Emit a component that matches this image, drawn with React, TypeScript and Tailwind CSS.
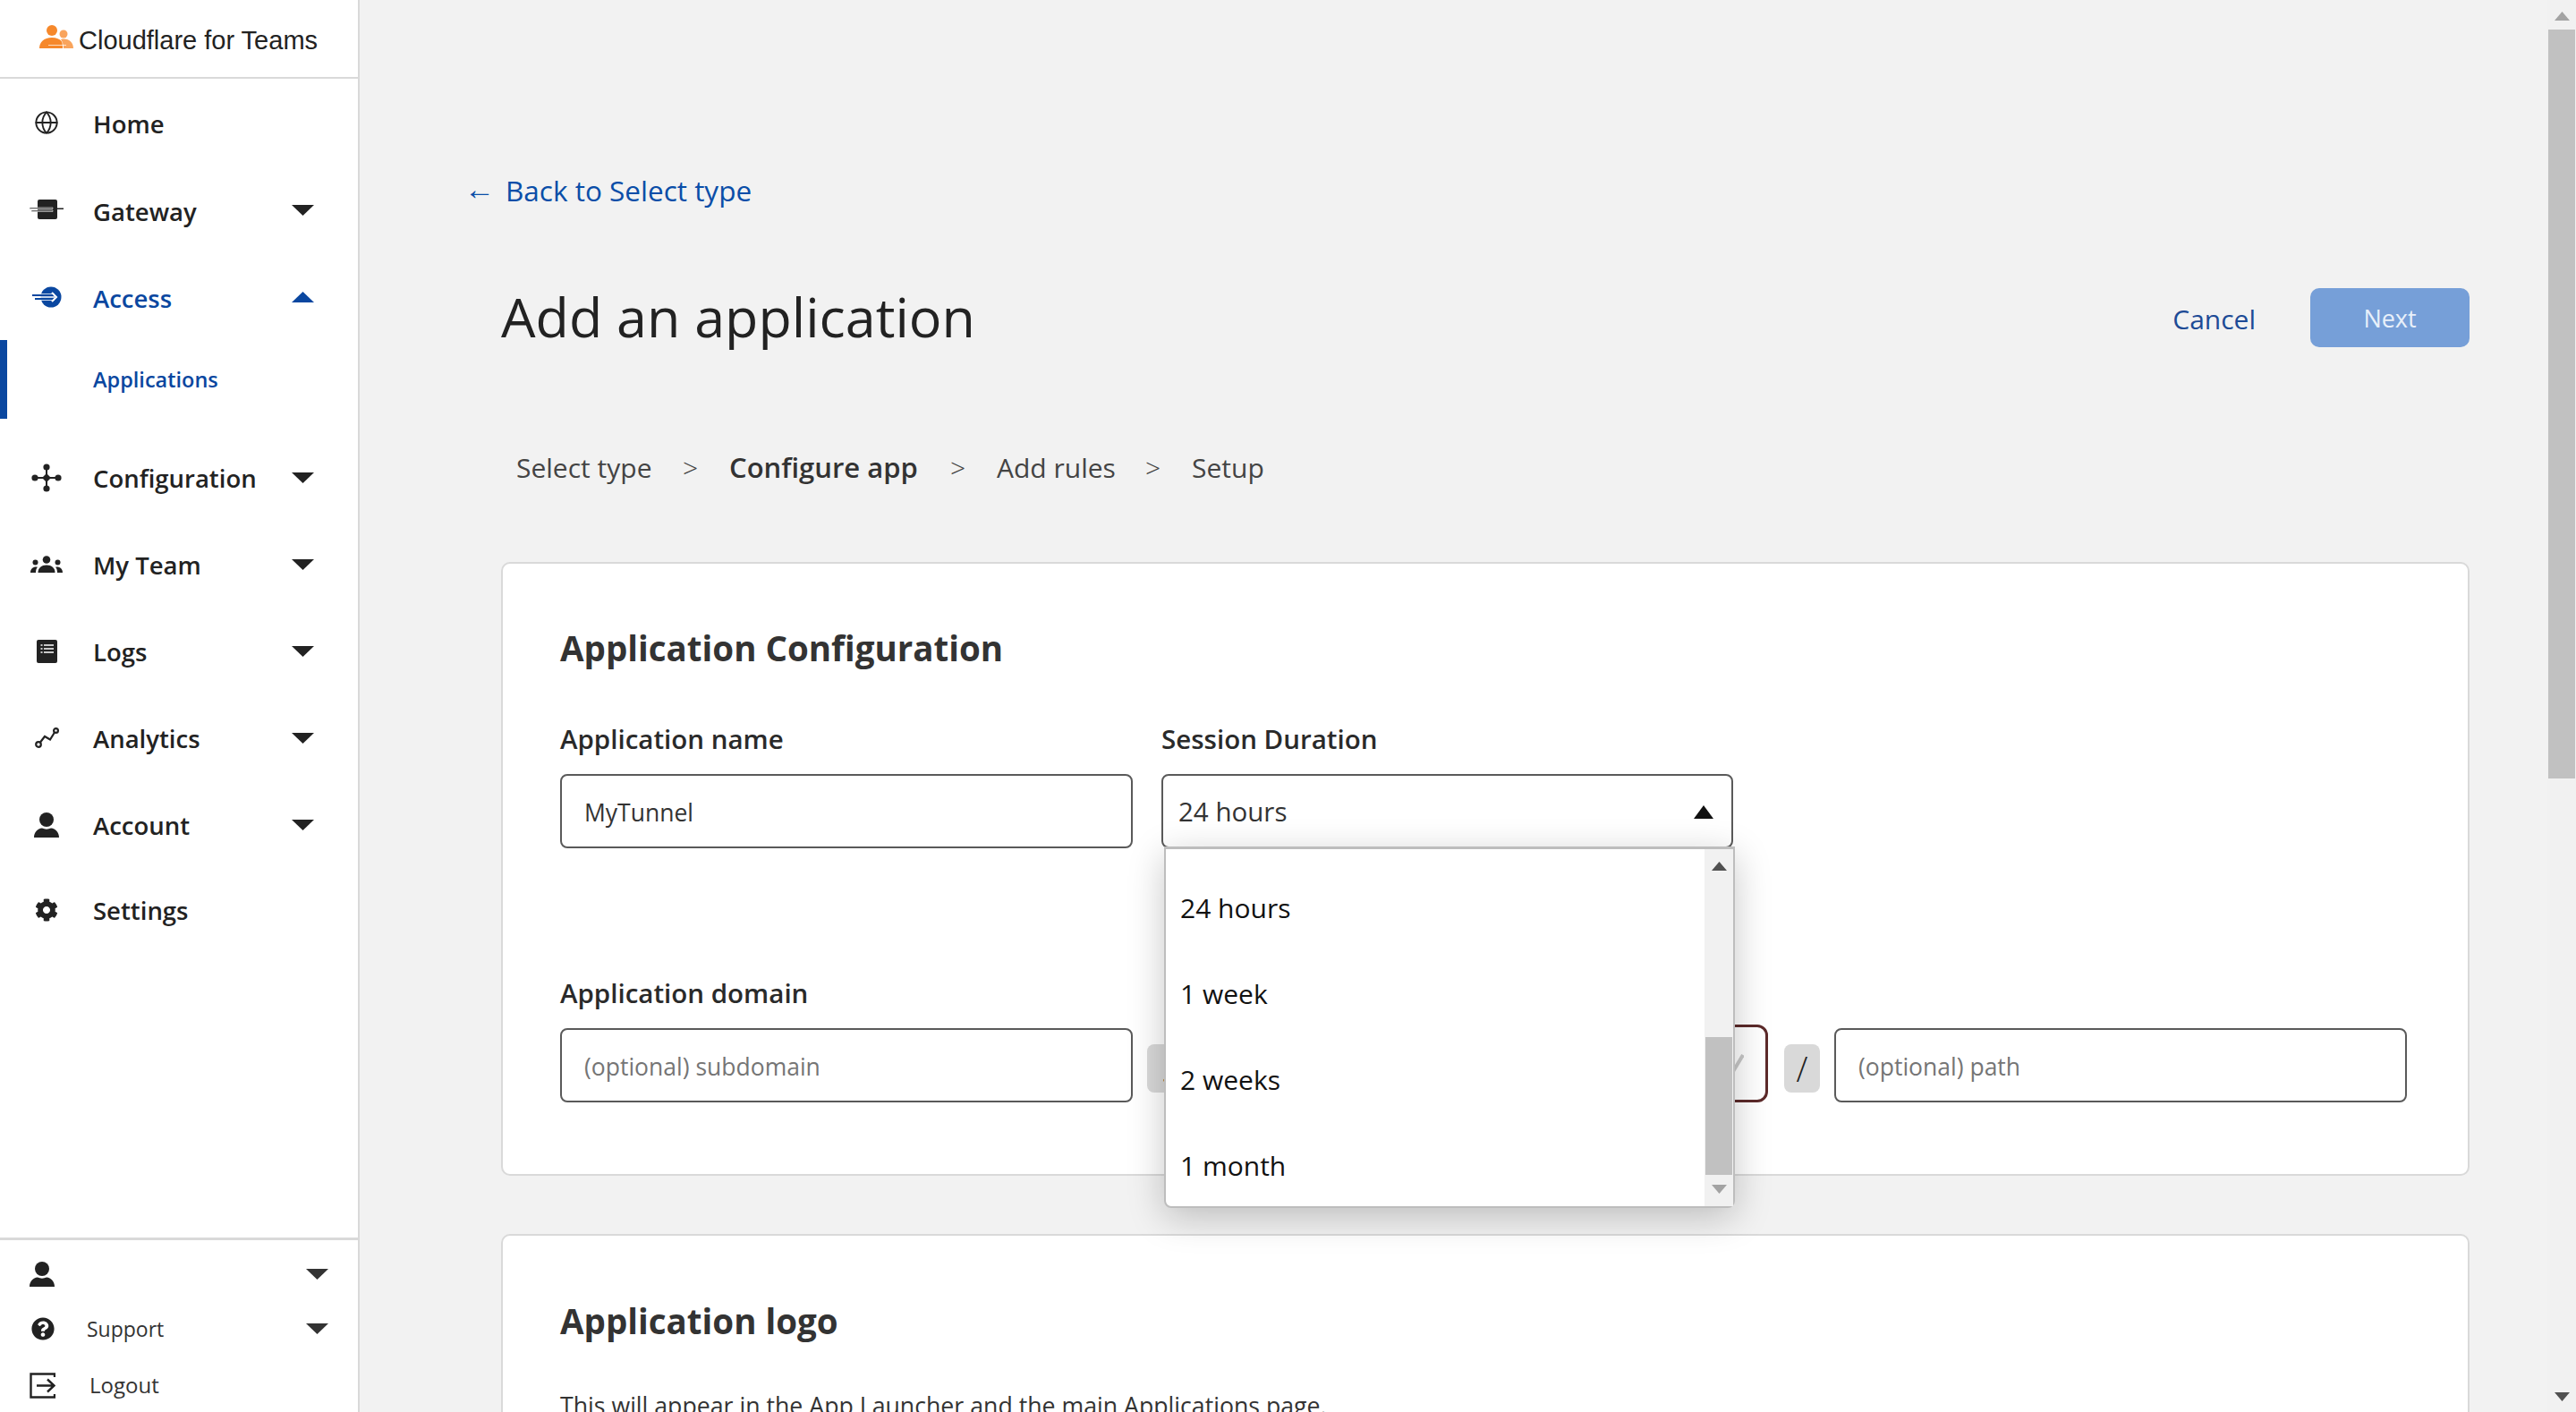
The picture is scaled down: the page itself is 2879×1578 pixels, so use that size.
import React from "react";
import { Globe } from "lucide-react";
import { FaCog, FaQuestionCircle } from "react-icons/fa";

const Caret = ({ up = false, color = "#222" }: { up?: boolean; color?: string }) => (
  <svg width="25" height="12" viewBox="0 0 25 12" className="shrink-0">
    <path d={up ? "M12.5 0 25 12H0z" : "M0 0h25L12.5 12z"} fill={color} />
  </svg>
);

const GatewayIcon = () => (
  <svg width="38" height="24" viewBox="0 0 38 24" fill="#222">
    <rect x="9" y="0" width="22" height="22" rx="2" />
    <path d="M31 9.5h7v1.5h-7z" />
    <path d="M0 9h26v1.4H0zM2 12h24v1.4H2z" fill="#222" stroke="#fff" strokeWidth="0.6" />
  </svg>
);

const AccessIcon = () => (
  <svg width="33" height="24" viewBox="0 0 33 24">
    <circle cx="21" cy="12" r="11.5" fill="#0a47a0" />
    <path d="M0 10h25M3 14h22" stroke="#fff" strokeWidth="3.6" />
    <path d="M0 10h25M3 14h22" stroke="#0a47a0" strokeWidth="1.8" />
    <path d="M22 7l5 5-5 5" stroke="#fff" strokeWidth="2" fill="none" />
  </svg>
);

const ConfigIcon = () => (
  <svg width="34" height="32" viewBox="0 0 34 32" fill="#222">
    <circle cx="17" cy="4" r="3.6" />
    <circle cx="17" cy="28" r="3.6" />
    <circle cx="4" cy="16" r="3.6" />
    <circle cx="30" cy="16" r="3.6" />
    <path d="M16 4h2v24h-2zM4 15h26v2H4z" />
    <path d="M17 11l5 5-5 5-5-5z" />
  </svg>
);

const TeamIcon = () => (
  <svg width="36" height="19" viewBox="0 0 36 19" fill="#222">
    <circle cx="18" cy="4.5" r="4.3" />
    <path d="M8.5 19c0-5.5 4-8.500 9.500-8.500s9.500 3 9.500 8.500z" />
    <circle cx="5.500" cy="7.500" r="3" />
    <circle cx="30.500" cy="7.500" r="3" />
    <path d="M0 19c0-4 2.500-6.500 6.500-6.500l1.500.3C6.500 14.500 6 16.500 6 19zM36 19c0-4-2.500-6.500-6.500-6.500l-1.500.3c1.500 1.700 2 3.700 2 6.200z" />
  </svg>
);

const LogsIcon = () => (
  <svg width="23" height="26" viewBox="0 0 23 26">
    <rect width="23" height="26" rx="2" fill="#222" />
    <path d="M8 6h11M8 10h11M8 14h11" stroke="#fff" strokeWidth="1.500" />
    <path d="M4.500 6h2M4.500 10h2M4.500 14h2" stroke="#fff" strokeWidth="1.500" />
  </svg>
);

const AnalyticsIcon = () => (
  <svg width="27" height="23" viewBox="0 0 27 23" fill="none" stroke="#222" strokeWidth="2.2">
    <circle cx="4" cy="19" r="2.800" />
    <circle cx="23.500" cy="3.500" r="2.400" />
    <path d="M6 16.500l5-6.500 6 3.500 5-8" />
  </svg>
);

const PersonIcon = () => (
  <svg width="28" height="28" viewBox="0 0 28 28" fill="#222">
    <circle cx="14" cy="8" r="8" />
    <path d="M0 28c0-6 4-10 9-10.500 3 1.500 7 1.500 10 0C24 18 28 22 28 28z" />
  </svg>
);

const LogoutIcon = () => (
  <svg width="29" height="29" viewBox="0 0 29 29" fill="none" stroke="#222" strokeWidth="2.400">
    <path d="M28 5V1.500H1.500v26H28V24" />
    <path d="M8 14.500h20M20 7.500l7.500 7-7.500 7" />
  </svg>
);

const LogoIcon = () => (
  <svg width="38" height="27" viewBox="0 0 38 27" fill="#f6882b">
    <circle cx="14" cy="6" r="6" />
    <path d="M0 26c0-7 5-12 14-12 5 0 9 1.500 11 4.500 1 1.500 1 7.500 1 7.500z" />
    <circle cx="27" cy="10" r="4.500" fill="#f9a45c" />
    <path d="M24 16c8-2 14 3 14 10H27c0-4-1-7-3-10z" fill="#f9a45c" />
    <path d="M10 22.500h20" stroke="#fff" strokeWidth="0.700" />
  </svg>
);

const NavRow = ({
  icon,
  label,
  caret,
  active,
  className,
}: {
  icon: React.ReactNode;
  label: string;
  caret?: boolean;
  active?: boolean;
  className: string;
}) => (
  <div className={`flex items-center pr-[49px] ${className}`}>
    <div className="w-[104px] flex justify-center">{icon}</div>
    <span className={`flex-1 pt-[3px] text-[27.5px] font-semibold ${active ? "text-[#0a47a0]" : "text-[#222]"}`}>{label}</span>
    {caret && <Caret up={active} color={active ? "#0a47a0" : "#222"} />}
  </div>
);

const Sidebar = () => (
  <aside className="w-[402px] shrink-0 h-full bg-white border-r-2 border-[#d9d9d9] flex flex-col justify-between">
    <div>
      <div className="h-[88px] border-b-2 border-[#d9d9d9] flex items-center pl-[44px] gap-[6px]">
        <div className="mb-[4px]"><LogoIcon /></div>
        <span className="font-['Liberation_Sans',sans-serif] text-[29px] text-[#222] pt-[6px]">Cloudflare for Teams</span>
      </div>
      <NavRow className="h-[98px]" icon={<Globe size={28} color="#222" strokeWidth={1.6} />} label="Home" />
      <NavRow className="h-[98px]" icon={<GatewayIcon />} label="Gateway" caret />
      <NavRow className="h-[96px]" icon={<AccessIcon />} label="Access" caret active />
      <div className="h-[88px] border-l-[8px] border-[#0a47a0] flex items-center pl-[96px] pt-[2px]">
        <span className="text-[23.5px] font-semibold text-[#0a47a0]">Applications</span>
      </div>
      <NavRow className="h-[97px] mt-[17px]" icon={<ConfigIcon />} label="Configuration" caret />
      <NavRow className="h-[97px]" icon={<TeamIcon />} label="My Team" caret />
      <NavRow className="h-[97px]" icon={<LogsIcon />} label="Logs" caret />
      <NavRow className="h-[97px]" icon={<AnalyticsIcon />} label="Analytics" caret />
      <NavRow className="h-[97px]" icon={<PersonIcon />} label="Account" caret />
      <NavRow className="h-[97px] -mt-[2px]" icon={<FaCog size={26} color="#222" />} label="Settings" />
    </div>
    <div className="border-t-[3px] border-[#d9d9d9] h-[195px] pl-[33px] pr-[33px] text-[#333] text-[24px]">
      <div className="h-[76px] flex items-center justify-between">
        <PersonIcon />
        <Caret color="#333" />
      </div>
      <div className="h-[44px] mt-[1px] flex items-center">
        <FaQuestionCircle size={26} color="#222" className="ml-[2px]" />
        <span className="ml-[36px] flex-1 text-[23px]">Support</span>
        <Caret color="#333" />
      </div>
      <div className="h-[44px] mt-[19px] flex items-center">
        <LogoutIcon />
        <span className="ml-[38px]">Logout</span>
      </div>
    </div>
  </aside>
);

const Steps = () => (
  <div className="h-[40px] mt-[114px] ml-[57px] flex items-center text-[30px] text-[#444]">
    <span className="w-[186px]">Select type</span>
    <span className="w-[52px] font-light">&gt;</span>
    <span className="w-[247px] text-[31px] font-semibold text-[#333]">Configure app</span>
    <span className="w-[52px] font-light">&gt;</span>
    <span className="w-[166px]">Add rules</span>
    <span className="w-[52px] font-light">&gt;</span>
    <span>Setup</span>
  </div>
);

const SessionSelect = () => (
  <div className="relative w-[639px] h-[83px]">
    <div className="h-full border-2 border-[#5a5a5a] rounded-[8px] bg-white flex items-center justify-between pl-[17px] pr-[20px] pt-[1px] text-[29.5px] text-[#333]">
      <span>24 hours</span>
      <svg width="22" height="15" viewBox="0 0 22 15"><path d="M11 0 22 15H0z" fill="#111" /></svg>
    </div>
    <div className="absolute left-[3px] top-[81px] w-[638px] h-[404px] bg-white rounded-b-[8px] border-2 border-t-[3px] border-[#bdbdbd] flex shadow-[0_10px_40px_rgba(0,0,0,0.22)] z-10">
      <div className="flex-1 pt-[17px] pl-[16px] text-[30px] text-[#111]">
        {["24 hours", "1 week", "2 weeks", "1 month"].map((o) => (
          <div key={o} className="h-[96px] flex items-center">{o}</div>
        ))}
      </div>
      <div className="w-[32px] bg-[#f1f1f1] flex flex-col items-center">
        <svg width="17" height="10" viewBox="0 0 17 10" className="mt-[14px]"><path d="M8.500 0 17 10H0z" fill="#505050" /></svg>
        <div className="w-[30px] h-[154px] bg-[#c1c1c1] mt-[186px]" />
        <svg width="17" height="10" viewBox="0 0 17 10" className="mt-[11px]"><path d="M0 0h17L8.500 10z" fill="#a3a3a3" /></svg>
      </div>
    </div>
  </div>
);

const Chip = ({ text, className }: { text: string; className: string }) => (
  <div className={`h-[54px] w-[40px] bg-[#d9d9d9] rounded-[8px] flex items-center justify-center text-[38px] text-[#222] font-light mb-[11px] ${className}`}>{text}</div>
);

const TextField = ({ value, placeholder }: { value?: string; placeholder?: string }) => (
  <div className={`w-[640px] h-[83px] border-2 border-[#5a5a5a] rounded-[8px] bg-white flex items-center pl-[25px] pt-[4px] text-[26.5px] ${value ? "text-[#333]" : "text-[#757575]"}`}>
    {value || placeholder}
  </div>
);

const App = () => (
  <div className="w-[2879px] h-[1578px] flex overflow-hidden bg-[#f2f2f2] font-['Open_Sans',sans-serif]">
    <Sidebar />
    <main className="flex-1 min-w-0 h-full overflow-hidden pl-[118px] pt-[193px]">
      <div className="h-[40px] flex items-center text-[31.5px] text-[#0a4ea8]">
        <span className="w-[46px] text-[34px] -ml-[1px] -mt-[6px]">←</span>
        <span>Back to Select type</span>
      </div>
      <div className="ml-[40px] w-[2200px]">
        <div className="mt-[89px] h-[66px] flex items-center justify-between">
          <h1 className="text-[61px] -mt-[3px] text-[#222]">Add an application</h1>
          <div className="flex items-center gap-[61px]">
            <span className="text-[30px] text-[#1d4b96] pt-[2px]">Cancel</span>
            <button className="w-[178px] h-[66px] pt-[2px] rounded-[10px] bg-[#769fd8] text-[27px] text-[#e8f0fa]">Next</button>
          </div>
        </div>
      </div>
      <Steps />
      <div className="ml-[40px] w-[2200px]">
        <section className="mt-[86px] h-[686px] bg-white border-2 border-[#d9d9d9] rounded-[10px] pl-[64px] pt-[70px]">
          <h2 className="text-[38.5px] leading-[48px] font-bold text-[#333]">Application Configuration</h2>
          <div className="mt-[58px] flex gap-[32px]">
            <div>
              <div className="h-[40px] flex items-center text-[29.5px] font-semibold text-[#2a2a2a]">Application name</div>
              <div className="mt-[19px]"><TextField value="MyTunnel" /></div>
            </div>
            <div>
              <div className="h-[40px] flex items-center text-[29.5px] font-semibold text-[#2a2a2a]">Session Duration</div>
              <div className="mt-[19px]"><SessionSelect /></div>
            </div>
          </div>
          <div className="mt-[142px] h-[40px] flex items-center text-[29.5px] font-semibold text-[#2a2a2a]">Application domain</div>
          <div className="mt-[15px] flex items-end">
            <TextField placeholder="(optional) subdomain" />
            <Chip text="." className="ml-[16px]" />
            <div className="ml-[16px] w-[638px] h-[87px] border-[3px] border-[#5c2a2a] rounded-[12px] bg-white flex items-center justify-end pr-[24px]">
              <svg width="14" height="22" viewBox="0 0 14 22"><path d="M1 21 13 1" stroke="#c8c8c8" strokeWidth="4" /></svg>
            </div>
            <Chip text="/" className="ml-[18px]" />
            <div className="ml-[16px]"><TextField placeholder="(optional) path" /></div>
          </div>
        </section>
        <section className="mt-[65px] h-[400px] bg-white border-2 border-[#d9d9d9] rounded-[10px] pl-[64px] pt-[71px]">
          <h2 className="text-[38.5px] leading-[48px] font-bold text-[#333]">Application logo</h2>
          <p className="mt-[53px] text-[26.7px] leading-[36px] text-[#333]">This will appear in the App Launcher and the main Applications page.</p>
        </section>
      </div>
    </main>
    <div className="w-[32px] shrink-0 h-full bg-[#f1f1f1] flex flex-col items-center">
      <svg width="17" height="10" viewBox="0 0 17 10" className="mt-[13px]"><path d="M8.500 0 17 10H0z" fill="#a3a3a3" /></svg>
      <div className="w-[30px] h-[837px] bg-[#c1c1c1] mt-[10px]" />
      <div className="flex-1" />
      <svg width="17" height="10" viewBox="0 0 17 10" className="mb-[12px]"><path d="M0 0h17L8.500 10z" fill="#505050" /></svg>
    </div>
  </div>
);

export default App;
